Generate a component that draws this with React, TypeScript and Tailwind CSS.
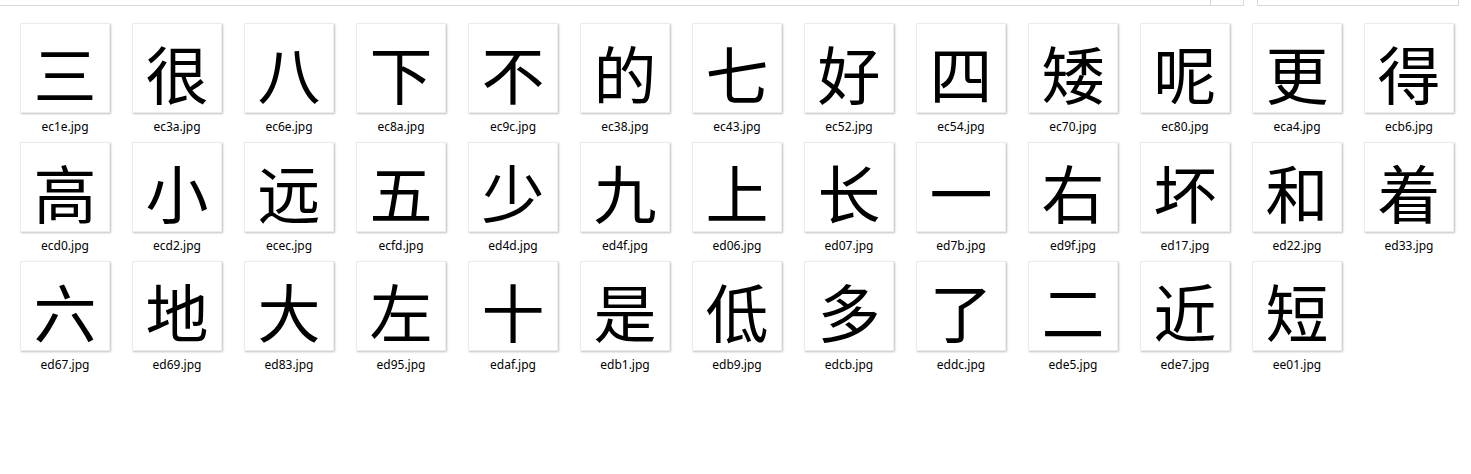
import React from "react";

const items: [string, string][] = [
  ["三", "ec1e"], ["很", "ec3a"], ["八", "ec6e"], ["下", "ec8a"], ["不", "ec9c"], ["的", "ec38"], ["七", "ec43"], ["好", "ec52"], ["四", "ec54"], ["矮", "ec70"], ["呢", "ec80"], ["更", "eca4"], ["得", "ecb6"],
  ["高", "ecd0"], ["小", "ecd2"], ["远", "ecec"], ["五", "ecfd"], ["少", "ed4d"], ["九", "ed4f"], ["上", "ed06"], ["长", "ed07"], ["一", "ed7b"], ["右", "ed9f"], ["坏", "ed17"], ["和", "ed22"], ["着", "ed33"],
  ["六", "ed67"], ["地", "ed69"], ["大", "ed83"], ["左", "ed95"], ["十", "edaf"], ["是", "edb1"], ["低", "edb9"], ["多", "edcb"], ["了", "eddc"], ["二", "ede5"], ["近", "ede7"], ["短", "ee01"],
];

export default function App() {
  return (
    <div className="w-[1471px] h-[474px] bg-white overflow-hidden relative">
      <div className="flex h-[6px]">
        <div className="w-[1210px] border-b border-[#d9d9d9]" />
        <div className="w-[34px] border-l border-r border-b border-[#d9d9d9]" />
        <div className="w-[13px]" />
        <div className="w-[202px] border-l border-r border-b border-[#d9d9d9]" />
      </div>
      <div className="grid grid-cols-[repeat(13,90px)] gap-x-[22px] gap-y-[7px] pl-[20px] pt-[17px]">
        {items.map(([ch, name]) => (
          <div key={name} className="flex flex-col items-center">
            <div className="w-[90px] h-[90px] bg-white border border-[#ececec] shadow-[1px_1px_2px_rgba(0,0,0,0.25)] flex items-center justify-center">
              <span
                className="text-[63px] leading-none text-black font-normal pt-[6px]"
                style={{ fontFamily: '"Noto Sans CJK SC", sans-serif' }}
              >
                {ch}
              </span>
            </div>
            <div
              className="mt-[6px] h-[16px] text-[12px] leading-[16px] text-black whitespace-nowrap"
              style={{ fontFamily: '"Noto Sans", "Open Sans", sans-serif' }}
            >
              {name}.jpg
            </div>
          </div>
        ))}
      </div>
    </div>
  );
}
